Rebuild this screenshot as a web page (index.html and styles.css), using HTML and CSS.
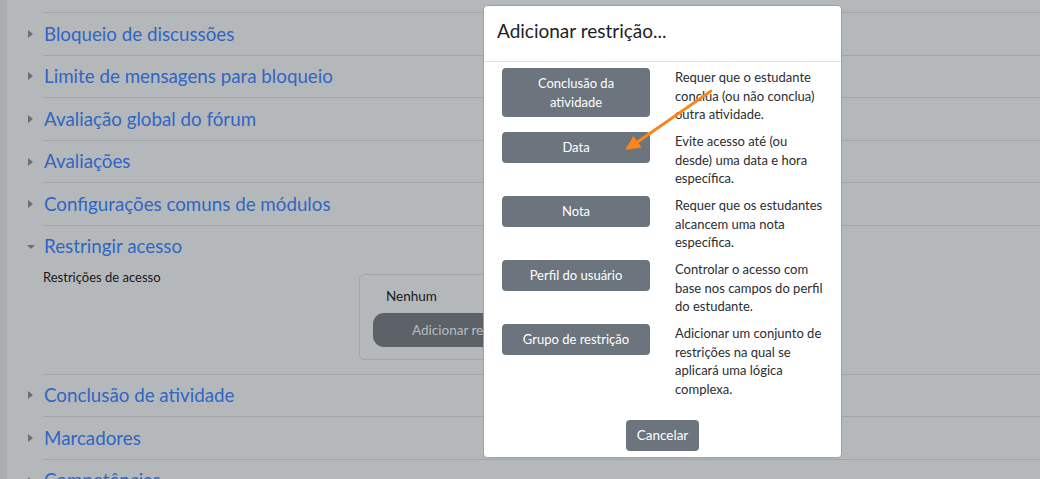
FILE: index.html
```html
<!DOCTYPE html>
<html lang="pt-BR">
<head>
<meta charset="utf-8">
<title>Adicionar restrição</title>
<link rel="stylesheet" href="styles.css">
</head>
<body>
<div class="page">
  <div class="rail"></div>
  <main class="form">
    <section class="sec">
      <h3 class="sec-head"><span class="caret"></span><a href="#">Bloqueio de discussões</a></h3>
    </section>
    <section class="sec">
      <h3 class="sec-head"><span class="caret"></span><a href="#">Limite de mensagens para bloqueio</a></h3>
    </section>
    <section class="sec">
      <h3 class="sec-head"><span class="caret"></span><a href="#">Avaliação global do fórum</a></h3>
    </section>
    <section class="sec">
      <h3 class="sec-head"><span class="caret"></span><a href="#">Avaliações</a></h3>
    </section>
    <section class="sec">
      <h3 class="sec-head"><span class="caret"></span><a href="#">Configurações comuns de módulos</a></h3>
    </section>
    <section class="sec open">
      <h3 class="sec-head"><span class="caret down"></span><a href="#">Restringir acesso</a></h3>
      <div class="sec-body">
        <div class="field-label">Restrições de acesso</div>
        <div class="avail-box">
          <div class="avail-none">Nenhum</div>
          <button class="avail-add" type="button">Adicionar restrição...</button>
        </div>
      </div>
    </section>
    <section class="sec">
      <h3 class="sec-head"><span class="caret"></span><a href="#">Conclusão de atividade</a></h3>
    </section>
    <section class="sec">
      <h3 class="sec-head"><span class="caret"></span><a href="#">Marcadores</a></h3>
    </section>
    <section class="sec">
      <h3 class="sec-head"><span class="caret"></span><a href="#">Competências</a></h3>
    </section>
  </main>
</div>

<div class="modal" role="dialog">
  <div class="modal-header">
    <h4 class="modal-title">Adicionar restrição...</h4>
  </div>
  <div class="modal-body">
    <div class="opt">
      <button class="btn" type="button">Conclusão da atividade</button>
      <div class="opt-desc">Requer que o estudante conclua (ou não conclua) outra atividade.</div>
    </div>
    <div class="opt">
      <button class="btn" type="button">Data</button>
      <div class="opt-desc">Evite acesso até (ou desde) uma data e hora específica.</div>
    </div>
    <div class="opt">
      <button class="btn" type="button">Nota</button>
      <div class="opt-desc">Requer que os estudantes alcancem uma nota específica.</div>
    </div>
    <div class="opt">
      <button class="btn" type="button">Perfil do usuário</button>
      <div class="opt-desc">Controlar o acesso com base nos campos do perfil do estudante.</div>
    </div>
    <div class="opt">
      <button class="btn" type="button">Grupo de restrição</button>
      <div class="opt-desc">Adicionar um conjunto de restrições na qual se aplicará uma lógica complexa.</div>
    </div>
  </div>
  <div class="modal-footer">
    <button class="btn btn-cancel" type="button">Cancelar</button>
  </div>
</div>

<svg class="arrow" width="1040" height="479" viewBox="0 0 1040 479" aria-hidden="true">
  <line x1="711" y1="91" x2="636" y2="143" stroke="#fb8519" stroke-width="2.8" stroke-linecap="round"/>
  <polygon points="625,150 633.5,136 641.5,147.5" fill="#fb8519"/>
</svg>
</body>
</html>
```

FILE: styles.css
```css
* { box-sizing: border-box; }

html, body {
  margin: 0;
  padding: 0;
}

body {
  width: 1040px;
  height: 479px;
  overflow: hidden;
  background: #b5b8bb;
  font-family: Lato, "Liberation Sans", sans-serif;
  color: #16181b;
  position: relative;
}

.page {
  display: flex;
  min-height: 479px;
}

.rail {
  width: 7px;
  flex: 0 0 7px;
  background: #abaeb1;
}

.form {
  flex: 1;
  padding-top: 12px;
  margin-left: 36px;
}

.sec {
  border-top: 1px solid #a2a5a8;
}

.sec-head {
  display: flex;
  align-items: center;
  margin: 0;
  padding: 9.5px 0 9.5px;
  font-size: 18.75px;
  font-weight: 400;
  line-height: 22.6px;
}

.sec-head a {
  color: #2f66c3;
  text-decoration: none;
}

.caret {
  width: 0;
  height: 0;
  margin-left: -15px;
  margin-right: 11px;
  border-left: 5px solid #6b6e72;
  border-top: 4.5px solid transparent;
  border-bottom: 4.5px solid transparent;
}

.caret.down {
  margin-left: -16.5px;
  margin-right: 9.5px;
  border-left: 4px solid transparent;
  border-right: 4px solid transparent;
  border-top: 4.5px solid #6b6e72;
  border-bottom: 0;
}

.open .sec-head {
  padding-bottom: 8px;
}

.sec-body {
  display: flex;
  align-items: flex-start;
  padding: 1px 0 14px;
}

.field-label {
  width: 316px;
  flex: 0 0 316px;
  font-size: 13px;
  line-height: 21px;
  color: #17191c;
}

.avail-box {
  margin-top: 6.5px;
  width: 420px;
  border: 1px solid #a3a6a9;
  border-radius: 5px;
  padding: 11px 13px 12px;
}

.avail-none {
  padding-left: 13px;
  font-size: 13.5px;
  line-height: 21px;
  color: #17191c;
}

.avail-add {
  display: block;
  margin-top: 6px;
  width: 260px;
  height: 34px;
  padding: 0 0 0 39px;
  text-align: left;
  border: 0;
  border-radius: 11px;
  background: #5c6168;
  color: #b9bcc0;
  font-family: Lato, "Liberation Sans", sans-serif;
  font-size: 13.5px;
  line-height: 22px;
}

/* Modal */
.modal {
  position: absolute;
  left: 483px;
  top: 5px;
  width: 359px;
  background: #fff;
  border: 1px solid #9da0a3;
  border-radius: 4px;
  color: #1d2125;
}

.modal-header {
  padding: 14px 13px 18px;
  border-bottom: 1px solid #dee2e6;
}

.modal-title {
  margin: 0;
  font-size: 19px;
  font-weight: 400;
  line-height: 22.8px;
  color: #1d2125;
}

.modal-body {
  display: flex;
  flex-direction: column;
  gap: 7.75px;
  padding: 6px 17px 0 18px;
}

.opt {
  display: grid;
  grid-template-columns: 148px 1fr;
  column-gap: 25px;
  align-items: start;
}

.btn {
  display: block;
  border: 0;
  border-radius: 4px;
  background: #6c757d;
  color: #fff;
  font-family: Lato, "Liberation Sans", sans-serif;
  font-size: 13px;
  line-height: 18.75px;
  padding: 6px 10px;
  text-align: center;
}

.opt-desc {
  font-size: 13px;
  line-height: 18.75px;
  color: #2a2e32;
}

.modal-footer {
  display: flex;
  justify-content: center;
  padding: 21px 0 6px;
}

.btn-cancel {
  padding: 6px 11px;
  font-size: 13.5px;
}

.arrow {
  position: absolute;
  left: 0;
  top: 0;
  pointer-events: none;
}
```
